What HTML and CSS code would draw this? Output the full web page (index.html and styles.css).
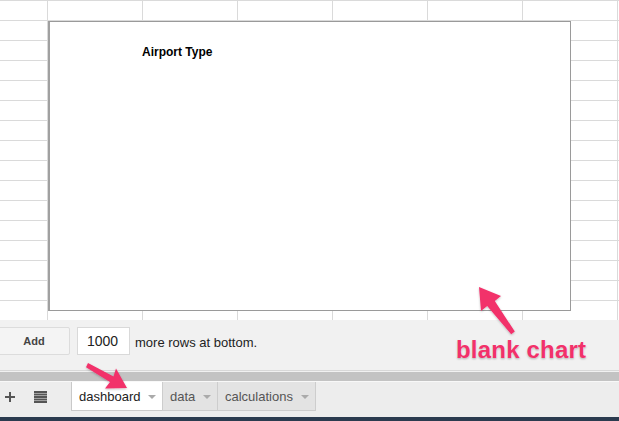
FILE: index.html
```html
<!DOCTYPE html>
<html>
<head>
<meta charset="utf-8">
<link rel="stylesheet" href="styles.css">
</head>
<body>
<div class="page">
  <div class="grid">
    <div class="chart">
      <div class="chart-title">Airport Type</div>
    </div>
  </div>
  <div class="addbar">
    <button class="add-btn">Add</button>
    <div class="rows-input">1000</div>
    <span class="rows-label">more rows at bottom.</span>
    <span class="callout">blank chart</span>
  </div>
  <div class="hscroll"><div class="hscroll-thumb"></div></div>
  <div class="tabbar">
    <div class="tab-tools">
      <svg class="icon-plus" width="12" height="12" viewBox="0 0 12 12"><path d="M5 1h2v4h4v2H7v4H5V7H1V5h4z" fill="#555"/></svg>
      <svg class="icon-list" width="13" height="12" viewBox="0 0 13 12"><path d="M0 0h13v2H0zM0 2.5h13v2H0zM0 5h13v2H0zM0 7.5h13v2H0zM0 10h13v2H0z" fill="#555"/></svg>
    </div>
    <div class="tab tab-active">dashboard<span class="caret"></span></div>
    <div class="tab">data<span class="caret"></span></div>
    <div class="tab">calculations<span class="caret"></span></div>
  </div>
  <div class="darkbar"></div>
  <svg class="arrows" width="619" height="421" viewBox="0 0 619 421">
    <defs>
      <filter id="sh" x="-20%" y="-20%" width="140%" height="140%">
        <feDropShadow dx="0" dy="1" stdDeviation="1" flood-color="#000" flood-opacity="0.25"/>
      </filter>
    </defs>
    <polygon filter="url(#sh)" fill="#f2306b" points="479,287 501,296 494.8,301 514.8,331.6 511.2,334.2 487.2,306 481,311"/>
    <polygon filter="url(#sh)" fill="#f2306b" points="127,388 105,388.5 110,382 86,367.2 88,363 113.5,376.5 116,368.5"/>
  </svg>
</div>
</body>
</html>
```

FILE: styles.css
```css
* { box-sizing: border-box; }
html, body {
  margin: 0;
  padding: 0;
  width: 619px;
  height: 421px;
  overflow: hidden;
  background: #fff;
  font-family: "Liberation Sans", Arial, sans-serif;
}
.page {
  position: relative;
  width: 619px;
  height: 421px;
  display: flex;
  flex-direction: column;
}
.grid {
  position: relative;
  height: 320px;
  flex: none;
  background-color: #fff;
  background-image:
    repeating-linear-gradient(to right, transparent 0 47px, #dadada 47px 48px, transparent 48px 95px),
    repeating-linear-gradient(to bottom, #dadada 0 1px, transparent 1px 20px);
}
.chart {
  position: absolute;
  left: 48px;
  top: 21px;
  width: 523px;
  height: 290px;
  background: #fff;
  border: 1px solid #9a9a9a;
  border-left: 2px solid #a0a0a0;
  padding: 23px 0 0 92px;
}
.chart-title {
  font-size: 12px;
  font-weight: bold;
  color: #000;
  line-height: 14px;
}
.addbar {
  position: relative;
  height: 50px;
  flex: none;
  background: #f1f1f1;
  display: flex;
  align-items: flex-start;
  padding-top: 7px;
}
.add-btn {
  width: 72px;
  height: 28px;
  margin-left: -2px;
  background: #f4f4f4;
  border: 1px solid #dcdcdc;
  border-radius: 2px;
  font-family: "Liberation Sans", Arial, sans-serif;
  font-size: 11px;
  font-weight: bold;
  color: #444;
  padding: 0;
}
.rows-input {
  width: 53px;
  height: 28px;
  margin-left: 7px;
  background: #fff;
  border: 1px solid #d9d9d9;
  font-size: 14px;
  color: #222;
  padding: 5px 0 0 9px;
}
.rows-label {
  margin-left: 5px;
  font-size: 13px;
  color: #222;
  padding-top: 8px;
}
.callout {
  position: absolute;
  left: 456px;
  top: 16px;
  font-size: 24px;
  font-weight: bold;
  color: #f2316a;
  text-shadow: 0 0 2px #fff, 0 1px 2px rgba(0,0,0,0.35);
  letter-spacing: 0.2px;
}
.hscroll {
  height: 12px;
  flex: none;
  border-top: 1px solid #d8d8d8;
  border-bottom: 1px solid #f8f8f8;
  background: #f1f1f1;
  padding-top: 1px;
}
.hscroll-thumb {
  height: 9px;
  background: #c3c3c3;
}
.tabbar {
  height: 35px;
  flex: none;
  background: #ededed;
  display: flex;
  align-items: flex-start;
}
.tab-tools {
  width: 71px;
  height: 29px;
  display: flex;
  align-items: center;
  padding-left: 4px;
  gap: 18px;
}
.icon-list { margin-top: 1px; }
.tab {
  height: 29px;
  display: flex;
  align-items: center;
  padding: 0 7px 0 7px;
  font-size: 13px;
  color: #555;
  background: #e3e3e3;
  border: 1px solid #cdcdcd;
  border-top: none;
  margin-left: -1px;
}
.tab-active {
  margin-left: 0;
  background: #fff;
  color: #222;
  width: 92px;
  border-color: #c9c9c9;
}
.tab .caret {
  display: inline-block;
  width: 0;
  height: 0;
  margin-left: 8px;
  margin-top: 2px;
  border-left: 4px solid transparent;
  border-right: 4px solid transparent;
  border-top: 4px solid #aaa;
}
.tab:nth-child(3) { width: 56px; }
.tab:nth-child(4) { width: 99px; }
.darkbar {
  flex: 1;
  background: #2b3b4f;
}
.arrows {
  position: absolute;
  left: 0;
  top: 0;
  pointer-events: none;
}
```
